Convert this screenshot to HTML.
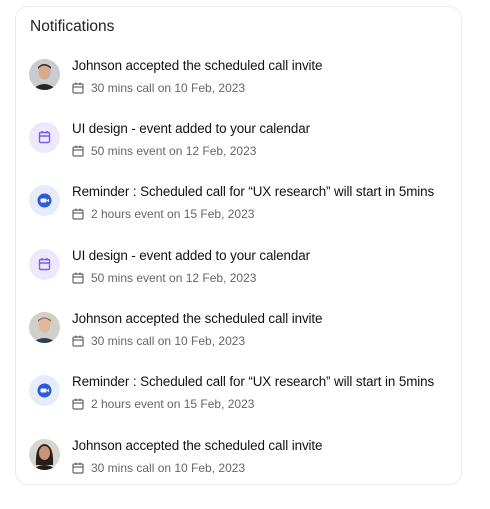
<!DOCTYPE html>
<html><head><meta charset="utf-8"><style>
body{margin:0;width:490px;height:509px;background:#fff;font-family:"Liberation Sans",Arial,sans-serif;position:relative;overflow:hidden}
.card{position:absolute;left:15px;top:6px;width:447px;height:479px;border:1px solid #ececec;border-radius:13px;box-sizing:border-box}
h1{position:absolute;left:30px;top:18px;margin:0;font-size:15.5px;font-weight:400;color:#222}
.it{position:absolute;left:29px;width:440px;height:40px}
.av{position:absolute;left:0;top:0;width:31px;height:31px;border-radius:50%;overflow:hidden}
.t{position:absolute;left:43px;top:-1px;font-size:13.4px;color:#111;white-space:nowrap;letter-spacing:-0.1px}
.m{position:absolute;left:43px;top:22px;font-size:12px;color:#666;white-space:nowrap}
.m svg{vertical-align:-2px;margin-right:7px}
</style></head><body>
<div class="card"></div>
<h1>Notifications</h1>
<svg width="0" height="0" style="position:absolute"><defs>
<symbol id="cal" viewBox="0 0 12 12"><rect x="1" y="2" width="10" height="9" rx="1" fill="none" stroke="#666" stroke-width="1.2"/><line x1="1" y1="5" x2="11" y2="5" stroke="#666" stroke-width="1.2"/><line x1="4" y1="0.5" x2="4" y2="3" stroke="#666" stroke-width="1.2"/><line x1="8" y1="0.5" x2="8" y2="3" stroke="#666" stroke-width="1.2"/></symbol>
<symbol id="face1" viewBox="0 0 31 31"><rect width="31" height="31" fill="#c9ccd0"/><ellipse cx="15.5" cy="13" rx="6" ry="7.5" fill="#d9a98e"/><path d="M9 10 Q15 3 22 10 L22 8 Q15 2 9 8Z" fill="#2b2522"/><path d="M3 31 Q15 19 28 31Z" fill="#252525"/></symbol>
<symbol id="face2" viewBox="0 0 31 31"><rect width="31" height="31" fill="#d0cfca"/><ellipse cx="15.5" cy="13" rx="6" ry="7.5" fill="#e2b79d"/><path d="M9 10 Q15 3 22 10 L22 8 Q15 3 9 8Z" fill="#8a6a4e"/><path d="M3 31 Q15 21 28 31Z" fill="#2d3d55"/></symbol>
<symbol id="face3" viewBox="0 0 31 31"><rect width="31" height="31" fill="#d7d5d0"/><path d="M7 26 Q6 6 15.5 5 Q25 6 24 26Z" fill="#2a1e18"/><ellipse cx="15.5" cy="14" rx="5.5" ry="7" fill="#c8957a"/><path d="M3 31 Q15 21 28 31Z" fill="#1c1c1c"/></symbol>
<symbol id="evt" viewBox="0 0 31 31"><circle cx="15.5" cy="15.5" r="15.5" fill="#ede9fb"/><rect x="10.5" y="10.5" width="10" height="10" rx="1.2" fill="none" stroke="#7b5cf0" stroke-width="1.4"/><line x1="10.5" y1="14" x2="20.5" y2="14" stroke="#7b5cf0" stroke-width="1.4"/><line x1="13" y1="9" x2="13" y2="11.5" stroke="#7b5cf0" stroke-width="1.4"/><line x1="18" y1="9" x2="18" y2="11.5" stroke="#7b5cf0" stroke-width="1.4"/></symbol>
<symbol id="zm" viewBox="0 0 31 31"><circle cx="15.5" cy="15.5" r="15.5" fill="#e7ecfa"/><circle cx="15.5" cy="15.5" r="7" fill="#2f5bd8"/><rect x="11.5" y="13.5" width="6" height="4" rx="1" fill="#fff"/><path d="M17.5 15.5 L20 13.8 L20 17.2Z" fill="#fff"/></symbol>
</defs></svg>

<div class="it" style="top:59px"><svg class="av" viewBox="0 0 31 31"><use href="#face1"/></svg><div class="t">Johnson accepted the scheduled call invite</div><div class="m"><svg width="12" height="12"><use href="#cal"/></svg>30 mins call on 10 Feb, 2023</div></div>
<div class="it" style="top:122px"><svg class="av" viewBox="0 0 31 31"><use href="#evt"/></svg><div class="t">UI design - event added to your calendar</div><div class="m"><svg width="12" height="12"><use href="#cal"/></svg>50 mins event on 12 Feb, 2023</div></div>
<div class="it" style="top:185px"><svg class="av" viewBox="0 0 31 31"><use href="#zm"/></svg><div class="t">Reminder : Scheduled call for “UX research” will start in 5mins</div><div class="m"><svg width="12" height="12"><use href="#cal"/></svg>2 hours event on 15 Feb, 2023</div></div>
<div class="it" style="top:249px"><svg class="av" viewBox="0 0 31 31"><use href="#evt"/></svg><div class="t">UI design - event added to your calendar</div><div class="m"><svg width="12" height="12"><use href="#cal"/></svg>50 mins event on 12 Feb, 2023</div></div>
<div class="it" style="top:312px"><svg class="av" viewBox="0 0 31 31"><use href="#face2"/></svg><div class="t">Johnson accepted the scheduled call invite</div><div class="m"><svg width="12" height="12"><use href="#cal"/></svg>30 mins call on 10 Feb, 2023</div></div>
<div class="it" style="top:375px"><svg class="av" viewBox="0 0 31 31"><use href="#zm"/></svg><div class="t">Reminder : Scheduled call for “UX research” will start in 5mins</div><div class="m"><svg width="12" height="12"><use href="#cal"/></svg>2 hours event on 15 Feb, 2023</div></div>
<div class="it" style="top:439px"><svg class="av" viewBox="0 0 31 31"><use href="#face3"/></svg><div class="t">Johnson accepted the scheduled call invite</div><div class="m"><svg width="12" height="12"><use href="#cal"/></svg>30 mins call on 10 Feb, 2023</div></div>
</body></html>
